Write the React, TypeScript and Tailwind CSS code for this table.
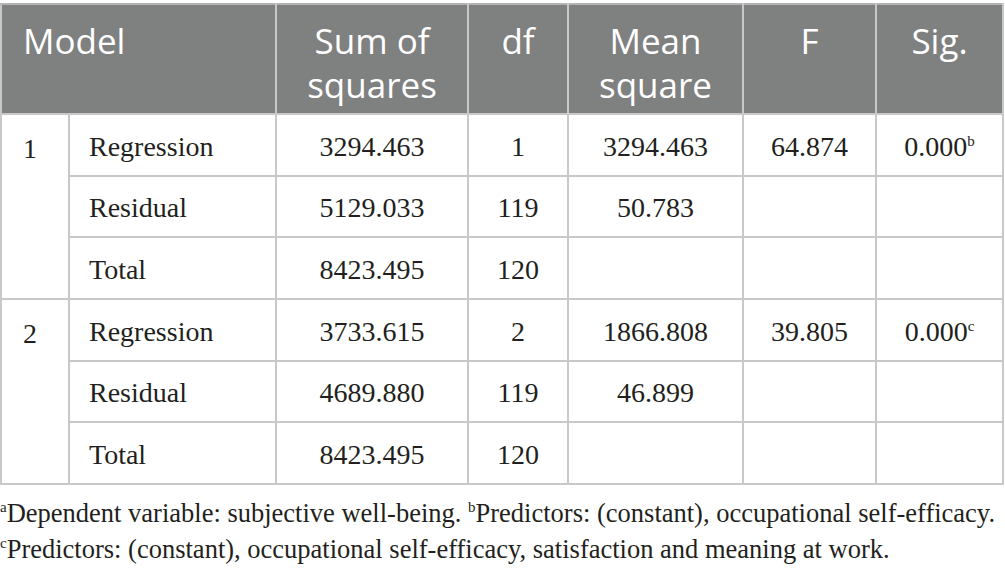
import React from 'react';

interface Row {
  label: string;
  sum: string;
  df: string;
  mean?: string;
  f?: string;
  sig?: string;
  sup?: string;
}

const models: { id: string; rows: Row[] }[] = [
  {
    id: '1',
    rows: [
      { label: 'Regression', sum: '3294.463', df: '1', mean: '3294.463', f: '64.874', sig: '0.000', sup: 'b' },
      { label: 'Residual', sum: '5129.033', df: '119', mean: '50.783' },
      { label: 'Total', sum: '8423.495', df: '120' },
    ],
  },
  {
    id: '2',
    rows: [
      { label: 'Regression', sum: '3733.615', df: '2', mean: '1866.808', f: '39.805', sig: '0.000', sup: 'c' },
      { label: 'Residual', sum: '4689.880', df: '119', mean: '46.899' },
      { label: 'Total', sum: '8423.495', df: '120' },
    ],
  },
];

const cell = 'border-2 border-[#c8c8c8] text-center align-middle pt-[3px]';
const head = 'border-2 border-[#c8c8c8] border-t-[#b4b4b4] bg-[#7f8080] align-top pt-[14px] text-center font-normal';

export default function App() {
  return (
    <div className="w-[1005px] h-[572px] bg-white pt-[3px] text-[#231f20]">
      <table
        className="table-fixed border-collapse w-[1004px] text-[28px] leading-[32px]"
        style={{ fontFamily: '"Liberation Serif", serif' }}
      >
        <colgroup>
          <col className="w-[68px]" />
          <col className="w-[207px]" />
          <col className="w-[192px]" />
          <col className="w-[100px]" />
          <col className="w-[175px]" />
          <col className="w-[133px]" />
          <col />
        </colgroup>
        <thead>
          <tr
            className="h-[110px] text-white text-[35px] leading-[44px]"
            style={{ fontFamily: '"Open Sans", sans-serif' }}
          >
            <th colSpan={2} className={`${head} !text-left pl-[21px]`}>Model</th>
            <th className={head}>Sum of<br />squares</th>
            <th className={head}>df</th>
            <th className={head}>Mean<br />square</th>
            <th className={head}>F</th>
            <th className={head}>Sig.</th>
          </tr>
        </thead>
        <tbody>
          {models.map((m) =>
            m.rows.map((r, i) => (
              <tr key={m.id + r.label} className={i === 1 ? 'h-[61px]' : 'h-[62px]'}>
                {i === 0 && (
                  <td rowSpan={3} className="border-2 border-[#c8c8c8] align-top pl-[21px] pt-[18px]">
                    {m.id}
                  </td>
                )}
                <td className="border-2 border-[#c8c8c8] pl-[19px] align-middle pt-[3px]">{r.label}</td>
                <td className={cell}>{r.sum}</td>
                <td className={cell}>{r.df}</td>
                <td className={cell}>{r.mean ?? ''}</td>
                <td className={cell}>{r.f ?? ''}</td>
                <td className={cell}>
                  {r.sig}
                  {r.sup && <sup className="text-[15px] relative -top-[10px] align-baseline">{r.sup}</sup>}
                </td>
              </tr>
            ))
          )}
        </tbody>
      </table>
      <div
        className="mt-[10px] text-[26.5px] leading-[36px]"
        style={{ fontFamily: '"Liberation Serif", serif' }}
      >
        <p>
          <sup className="text-[15px] align-baseline relative -top-[10px]">a</sup>Dependent variable: subjective well-being.{' '}
          <sup className="text-[15px] align-baseline relative -top-[10px]">b</sup>Predictors: (constant), occupational self-efficacy.
        </p>
        <p>
          <sup className="text-[15px] align-baseline relative -top-[10px]">c</sup>Predictors: (constant), occupational self-efficacy, satisfaction and meaning at work.
        </p>
      </div>
    </div>
  );
}
